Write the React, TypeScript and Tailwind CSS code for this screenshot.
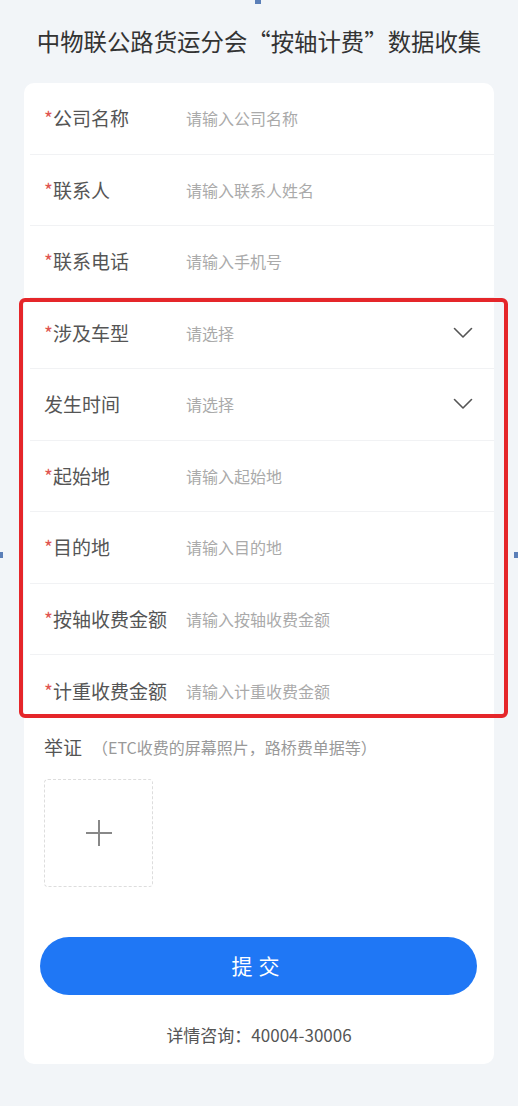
const rows = [
  { label: "公司名称", placeholder: "请输入公司名称", required: true },
  { label: "联系人", placeholder: "请输入联系人姓名", required: true },
  { label: "联系电话", placeholder: "请输入手机号", required: true },
];

const boxed = [
  { label: "涉及车型", placeholder: "请选择", required: true, select: true },
  { label: "发生时间", placeholder: "请选择", required: false, select: true },
  { label: "起始地", placeholder: "请输入起始地", required: true },
  { label: "目的地", placeholder: "请输入目的地", required: true },
  { label: "按轴收费金额", placeholder: "请输入按轴收费金额", required: true },
  { label: "计重收费金额", placeholder: "请输入计重收费金额", required: true },
];

type Field = { label: string; placeholder: string; required: boolean; select?: boolean };

function Chevron() {
  return (
    <svg width="20" height="12" viewBox="0 0 20 12" fill="none">
      <polyline points="1.5,1.5 10,10 18.5,1.5" stroke="#555" strokeWidth="1.6" strokeLinecap="round" strokeLinejoin="round" />
    </svg>
  );
}

function Row({ field, last }: { field: Field; last?: boolean }) {
  return (
    <div className={`ml-[6px] flex h-[71.5px] items-center pl-[14px] pr-[21px] ${last ? "" : "border-b border-[#f1f2f4]"}`}>
      <div className="w-[142px] shrink-0 whitespace-nowrap text-[19px] text-[#555]">
        {field.required && <span className="text-[#e0554f]">*</span>}
        {field.label}
      </div>
      <div className="flex-1 text-[16px] text-[#aaa]">{field.placeholder}</div>
      {field.select && <Chevron />}
    </div>
  );
}

export default function App() {
  return (
    <div className="relative min-h-[1106px] bg-[#f2f5f8] pb-[41px] font-['Noto_Sans_CJK_SC','Noto_Sans',sans-serif]">
      {/* selection handles from the screenshot */}
      <div className="absolute left-[255px] top-0 h-[4px] w-[6px] bg-[#5b7fb8]" />
      <div className="absolute left-0 top-[552px] h-[6px] w-[3px] bg-[#5b7fb8]" />
      <div className="absolute right-0 top-[552px] h-[6px] w-[4px] bg-[#5b7fb8]" />

      <div className="flex h-[83px] items-center justify-center whitespace-nowrap text-[23.4px] text-[#333]">
        中物联公路货运分会“按轴计费”数据收集
      </div>

      <div className="mx-[24px] rounded-[10px] bg-white pb-[16px]">
        {rows.map((r) => (
          <Row key={r.label} field={r} />
        ))}

        <div className="relative">
          {boxed.map((r, i) => (
            <Row key={r.label} field={r} last={i === boxed.length - 1} />
          ))}
          <div className="pointer-events-none absolute -left-[5px] -right-[14px] top-0 bottom-[9px] rounded-[6px] border-[4px] border-[#e5262a]" />
        </div>

        <div className="px-[20px] pt-[6px]">
          <div className="flex items-center whitespace-nowrap">
            <span className="text-[19px] text-[#555]">举证</span>
            <span className="ml-[10px] text-[16px] text-[#999]">（ETC收费的屏幕照片，路桥费单据等）</span>
          </div>
          <div className="mt-[18px] flex h-[108px] w-[109px] items-center justify-center rounded-[4px] border border-dashed border-[#ddd]">
            <svg width="28" height="28" viewBox="0 0 28 28">
              <line x1="14" y1="1" x2="14" y2="27" stroke="#888" strokeWidth="2" />
              <line x1="1" y1="14" x2="27" y2="14" stroke="#888" strokeWidth="2" />
            </svg>
          </div>
        </div>

        <div className="ml-[16px] mr-[17px] mt-[50px] flex h-[58px] items-center justify-center rounded-full bg-[#1f77f5] text-[21px] tracking-[6px] text-white">
          提交
        </div>

        <div className="mt-[27px] text-center text-[17px] text-[#555]">详情咨询：40004-30006</div>
      </div>
    </div>
  );
}
